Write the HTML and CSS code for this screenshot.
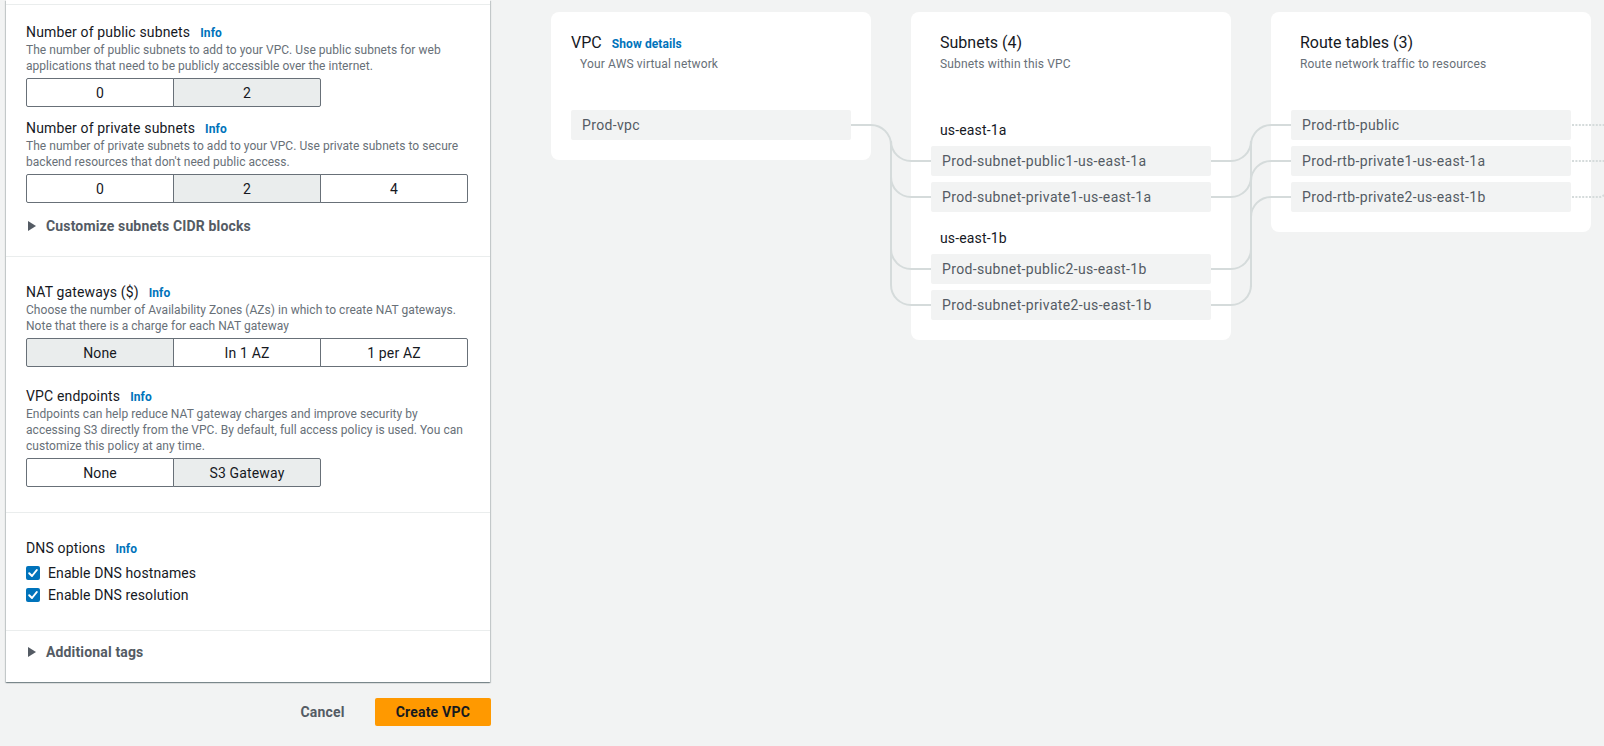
FILE: index.html
```html
<!DOCTYPE html>
<html lang="en">
<head>
<meta charset="utf-8">
<title>Create VPC</title>
<link rel="stylesheet" href="styles.css">
</head>
<body>
<div class="page">
  <div class="left">
    <div class="panel">
      <section class="sec sec-a">
        <div class="label">Number of public subnets<a class="info">Info</a></div>
        <div class="desc">The number of public subnets to add to your VPC. Use public subnets for web<br>applications that need to be publicly accessible over the internet.</div>
        <div class="seg">
          <div class="seg-btn first">0</div>
          <div class="seg-btn on last">2</div>
        </div>
        <div class="label next">Number of private subnets<a class="info">Info</a></div>
        <div class="desc">The number of private subnets to add to your VPC. Use private subnets to secure<br>backend resources that don't need public access.</div>
        <div class="seg">
          <div class="seg-btn first">0</div>
          <div class="seg-btn on">2</div>
          <div class="seg-btn last">4</div>
        </div>
        <div class="expander exp-a">
          <svg class="caret" width="8" height="10" viewBox="0 0 8 10"><polygon points="0,0 8,5 0,10" fill="#545b64"/></svg>
          <span>Customize subnets CIDR blocks</span>
        </div>
      </section>
      <section class="sec sec-b">
        <div class="label">NAT gateways ($)<a class="info">Info</a></div>
        <div class="desc">Choose the number of Availability Zones (AZs) in which to create NAT gateways.<br>Note that there is a charge for each NAT gateway</div>
        <div class="seg">
          <div class="seg-btn on first">None</div>
          <div class="seg-btn">In 1 AZ</div>
          <div class="seg-btn last">1 per AZ</div>
        </div>
        <div class="label next2">VPC endpoints<a class="info">Info</a></div>
        <div class="desc">Endpoints can help reduce NAT gateway charges and improve security by<br>accessing S3 directly from the VPC. By default, full access policy is used. You can<br>customize this policy at any time.</div>
        <div class="seg">
          <div class="seg-btn first">None</div>
          <div class="seg-btn on last">S3 Gateway</div>
        </div>
      </section>
      <section class="sec sec-c">
        <div class="label">DNS options<a class="info">Info</a></div>
        <div class="checks">
          <div class="check-row">
            <span class="cbox"><svg width="14" height="14" viewBox="0 0 14 14"><polyline points="3.2,7.2 6,10 10.8,4" fill="none" stroke="#fff" stroke-width="2" stroke-linecap="round" stroke-linejoin="round"/></svg></span>
            <span class="check-label">Enable DNS hostnames</span>
          </div>
          <div class="check-row">
            <span class="cbox"><svg width="14" height="14" viewBox="0 0 14 14"><polyline points="3.2,7.2 6,10 10.8,4" fill="none" stroke="#fff" stroke-width="2" stroke-linecap="round" stroke-linejoin="round"/></svg></span>
            <span class="check-label">Enable DNS resolution</span>
          </div>
        </div>
      </section>
      <section class="sec sec-d">
        <div class="expander">
          <svg class="caret" width="8" height="10" viewBox="0 0 8 10"><polygon points="0,0 8,5 0,10" fill="#545b64"/></svg>
          <span>Additional tags</span>
        </div>
      </section>
    </div>
    <div class="actions">
      <button class="btn-cancel">Cancel</button>
      <button class="btn-primary">Create VPC</button>
    </div>
  </div>

  <div class="diagram">
    <div class="cards">
      <div class="card">
        <div class="card-head">
          <div class="card-title vpc-title"><span>VPC</span><a class="show">Show details</a></div>
          <div class="card-sub">Your AWS virtual network</div>
        </div>
        <div class="item">Prod-vpc</div>
      </div>
      <div class="card">
        <div class="card-head">
          <div class="card-title">Subnets (4)</div>
          <div class="card-sub">Subnets within this VPC</div>
        </div>
        <div class="az-group">
          <div class="az">us-east-1a</div>
          <div class="item">Prod-subnet-public1-us-east-1a</div>
          <div class="item">Prod-subnet-private1-us-east-1a</div>
        </div>
        <div class="az-group second">
          <div class="az">us-east-1b</div>
          <div class="item">Prod-subnet-public2-us-east-1b</div>
          <div class="item">Prod-subnet-private2-us-east-1b</div>
        </div>
      </div>
      <div class="card">
        <div class="card-head">
          <div class="card-title">Route tables (3)</div>
          <div class="card-sub">Route network traffic to resources</div>
        </div>
        <div class="item">Prod-rtb-public</div>
        <div class="item">Prod-rtb-private1-us-east-1a</div>
        <div class="item">Prod-rtb-private2-us-east-1b</div>
      </div>
    </div>
    <svg class="links" width="1060" height="340" viewBox="0 0 1060 340">
      <g fill="none" stroke="#d5dbdb" stroke-width="2">
        <path d="M300 125 H320 A20 20 0 0 1 340 145 V285 A20 20 0 0 0 360 305 H380"/>
        <path d="M340 141 A20 20 0 0 0 360 161 H380"/>
        <path d="M340 177 A20 20 0 0 0 360 197 H380"/>
        <path d="M340 249 A20 20 0 0 0 360 269 H380"/>
        <path d="M660 161 H680 A20 20 0 0 0 700 141"/>
        <path d="M660 197 H680 A20 20 0 0 0 700 177"/>
        <path d="M660 269 H680 A20 20 0 0 0 700 249"/>
        <path d="M660 305 H680 A20 20 0 0 0 700 285"/>
        <path d="M700 143 V287"/>
        <path d="M700 145 A20 20 0 0 1 720 125 H740"/>
        <path d="M700 181 A20 20 0 0 1 720 161 H740"/>
        <path d="M700 217 A20 20 0 0 1 720 197 H740"/>
      </g>
      <g fill="none" stroke="#d5dbdb" stroke-width="2" stroke-dasharray="2 1.4">
        <path d="M1021 125 H1060"/>
        <path d="M1021 161 H1060"/>
        <path d="M1021 197 H1048 A8 8 0 0 0 1056 189"/>
      </g>
    </svg>
  </div>
</div>
</body>
</html>
```

FILE: styles.css
```css
* { box-sizing: border-box; }

html, body {
  margin: 0;
  padding: 0;
}

body {
  width: 1604px;
  height: 746px;
  overflow: hidden;
  background: #f2f3f3;
  font-family: Roboto, "Liberation Sans", Arial, sans-serif;
  color: #16191f;
}

.page {
  display: flex;
  align-items: flex-start;
}

/* ---------- left form column ---------- */
.left {
  margin-left: 6px;
  width: 484px;
}

.panel {
  background: #fff;
  padding-top: 4px;
  box-shadow: 0 1px 1px 0 rgba(0, 28, 36, 0.3),
              1px 1px 1px 0 rgba(0, 28, 36, 0.15),
              -1px 1px 1px 0 rgba(0, 28, 36, 0.15);
}

.sec {
  border-top: 1px solid #eaeded;
  padding-left: 20px;
  padding-right: 20px;
}

.sec-a { padding-top: 17px; padding-bottom: 20px; }
.sec-b { padding-top: 25px; padding-bottom: 25px; }
.sec-c { padding-top: 25px; padding-bottom: 24px; }
.sec-d { padding-top: 11px; padding-bottom: 20px; }

.label {
  font-size: 14px;
  line-height: 20px;
  height: 20px;
  color: #16191f;
  letter-spacing: 0.15px;
}

.label.next { margin-top: 11px; }
.label.next2 { margin-top: 19px; }

.info {
  margin-left: 10px;
  font-size: 12px;
  line-height: 1;
  font-weight: 700;
  color: #0073bb;
  letter-spacing: 0.1px;
}

.desc {
  font-size: 12px;
  line-height: 16px;
  color: #687078;
  white-space: nowrap;
  letter-spacing: 0.04px;
}

.seg {
  display: flex;
  margin-top: 4px;
}

.seg-btn {
  width: 148px;
  height: 29px;
  border: 1px solid #687078;
  background: #fff;
  display: flex;
  align-items: center;
  justify-content: center;
  font-size: 14px;
  color: #16191f;
  letter-spacing: 0.15px;
}

.seg-btn + .seg-btn { margin-left: -1px; }
.seg-btn.on { background: #eaeded; }
.seg-btn.first { border-radius: 2px 0 0 2px; }
.seg-btn.last { border-radius: 0 2px 2px 0; }

.expander {
  display: flex;
  align-items: center;
  height: 20px;
  font-size: 14px;
  font-weight: 700;
  color: #545b64;
  letter-spacing: 0.15px;
}

.exp-a { margin-top: 13px; }

.caret {
  margin-left: 2px;
  margin-right: 10px;
  flex: none;
}

.checks { margin-top: 4px; }

.check-row {
  display: flex;
  align-items: center;
  height: 22px;
}

.cbox {
  width: 14px;
  height: 14px;
  border-radius: 2px;
  background: #0073bb;
  display: flex;
  flex: none;
}

.check-label {
  margin-left: 8px;
  font-size: 14px;
  color: #16191f;
  letter-spacing: 0.1px;
}

.actions {
  display: flex;
  justify-content: flex-end;
  align-items: center;
  margin-top: 16px;
  margin-right: -1px;
}

.btn-cancel {
  border: none;
  background: transparent;
  font-family: inherit;
  font-size: 14px;
  font-weight: 700;
  color: #545b64;
  padding: 0 20px;
  height: 28px;
  margin-right: 10px;
  letter-spacing: 0.2px;
}

.btn-primary {
  border: none;
  border-radius: 2px;
  background: #ff9900;
  font-family: inherit;
  font-size: 14px;
  font-weight: 700;
  color: #16191f;
  padding: 0 21px;
  height: 28px;
  letter-spacing: 0.2px;
}

/* ---------- diagram ---------- */
.diagram {
  position: relative;
  margin-left: 61px;
  padding-top: 12px;
}

.cards {
  display: flex;
  align-items: flex-start;
  gap: 40px;
}

.card {
  width: 320px;
  background: #fff;
  border-radius: 8px;
  padding: 20px;
}

.card-head {
  padding-left: 9px;
  margin-bottom: 38px;
}

.card-title {
  display: flex;
  align-items: baseline;
  font-size: 16px;
  line-height: 22px;
  height: 22px;
  color: #16191f;
}

.vpc-title { margin-left: -9px; }

.show {
  margin-left: 10px;
  font-size: 12px;
  font-weight: 700;
  color: #0073bb;
  letter-spacing: 0.1px;
}

.card-sub {
  margin-top: 2px;
  font-size: 12px;
  line-height: 16px;
  color: #687078;
  letter-spacing: 0.15px;
}

.item {
  height: 30px;
  background: #f2f3f3;
  border-radius: 2px;
  padding-left: 11px;
  display: flex;
  align-items: center;
  font-size: 14px;
  color: #545b64;
  letter-spacing: 0.35px;
}

.item + .item { margin-top: 6px; }

.az-group { padding-top: 10px; }
.az-group.second { padding-top: 16px; }

.az {
  font-size: 14px;
  line-height: 20px;
  color: #16191f;
  padding-left: 9px;
  margin-bottom: 6px;
  letter-spacing: 0.15px;
}

.links {
  position: absolute;
  left: 0;
  top: 0;
  overflow: visible;
  pointer-events: none;
}
```
